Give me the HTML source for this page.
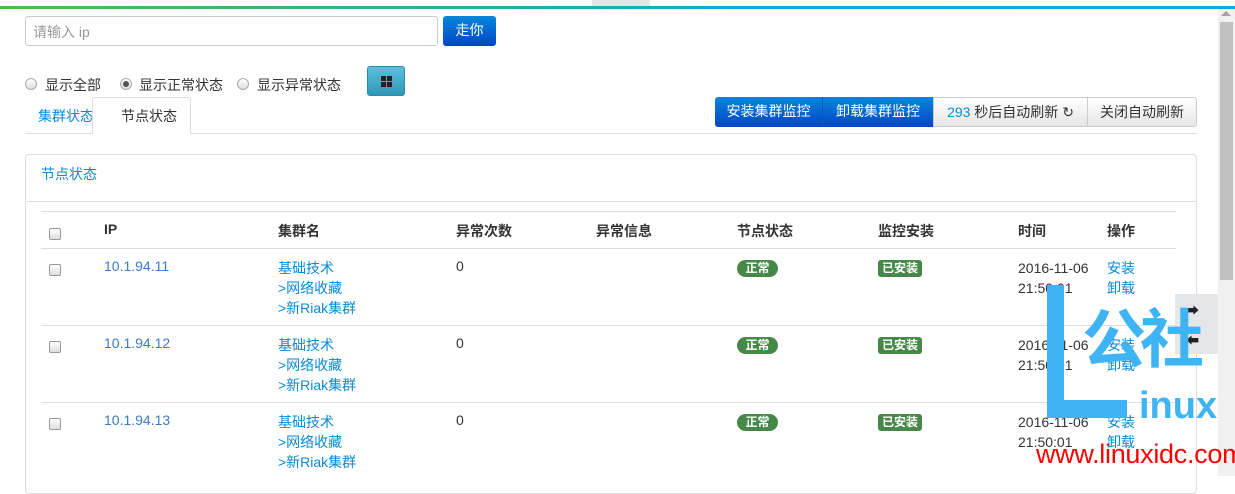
<!DOCTYPE html>
<html><head><meta charset="utf-8"><style>
*{box-sizing:border-box;margin:0;padding:0}
body{width:1235px;height:476px;overflow:hidden;background:#fff;font-family:"Liberation Sans","Noto Sans CJK SC",sans-serif;font-size:14px;color:#333;position:relative}
.a{position:absolute;white-space:nowrap}
.blue{color:#0a8ad2}
.cb{position:absolute;width:12px;height:12px;border:1px solid #999;border-radius:2px;background:linear-gradient(#fff,#ddd)}
.radio{position:absolute;width:12px;height:12px;border:1px solid #aaa;border-radius:50%;background:linear-gradient(#fff,#ddd)}
.btn{position:absolute;height:30px;line-height:28px;text-align:center;font-size:14px}
.th{font-weight:bold;color:#333}
.hl{position:absolute;left:41px;width:1135px;height:1px;background:#ddd}
.b1{position:absolute;background:#468847;color:#fff;font-size:12px;font-weight:bold;height:17px;line-height:17px;text-align:center}
.wm{position:absolute;color:#3fb4f5;font-weight:bold}
</style></head><body>
<div class="a" style="left:592px;top:0;width:58px;height:6px;background:#e6e6e6"></div>
<div class="a" style="left:0;top:6px;width:1235px;height:3px;background:linear-gradient(90deg,#4cc13a,#22b0a0 40%,#10a8e0 60%,#10a8e8)"></div>
<div class="a" style="left:1218px;top:9px;width:17px;height:467px;background:#f0f0f0"></div>
<div class="a" style="left:1220px;top:22px;width:13px;height:258px;background:#c1c1c1"></div>
<div class="a" style="left:1221px;top:11px;width:0;height:0;border-left:5px solid transparent;border-right:5px solid transparent;border-bottom:5px solid #a3a3a3"></div>

<div class="a" style="left:25px;top:16px;width:413px;height:30px;border:1px solid #ccc;border-radius:3px;"></div>
<div class="a" style="left:33px;top:22px;color:#999">请输入 ip</div>
<div class="btn" style="left:443px;top:16px;width:53px;background:linear-gradient(#0a86dc,#0046c6);color:#fff;border-radius:3px">走你</div>

<div class="radio" style="left:25px;top:78px"></div><div class="a" style="left:45px;top:75px">显示全部</div>
<div class="radio" style="left:120px;top:78px"><div style="width:6px;height:6px;border-radius:50%;background:#555;margin:2px"></div></div><div class="a" style="left:139px;top:75px">显示正常状态</div>
<div class="radio" style="left:237px;top:78px"></div><div class="a" style="left:257px;top:75px">显示异常状态</div>
<div class="a" style="left:367px;top:66px;width:38px;height:30px;border-radius:3px;background:linear-gradient(#5bc0de,#2f96b4);border:1px solid #2a8ab0"><div style="position:absolute;left:13px;top:9px;width:5px;height:5px;background:#222;box-shadow:6px 0 #222,0 6px #222,6px 6px #222"></div></div>

<div class="a" style="left:25px;top:133px;width:1172px;height:1px;background:#ddd"></div>
<div class="a blue" style="left:38px;top:106px">集群状态</div>
<div class="a" style="left:92px;top:97px;width:99px;height:37px;border:1px solid #ddd;border-bottom:none;background:#fff;border-radius:3px 3px 0 0"></div>
<div class="a" style="left:121px;top:106px">节点状态</div>

<div class="btn" style="left:715px;top:97px;width:107px;background:linear-gradient(#0a86dc,#0046c6);color:#fff;border-radius:3px 0 0 3px">安装集群监控</div>
<div class="btn" style="left:822px;top:97px;width:111px;background:linear-gradient(#0a86dc,#0046c6);color:#fff;border-left:1px solid #0a5bb0">卸载集群监控</div>
<div class="btn" style="left:933px;top:97px;width:155px;background:linear-gradient(#fff,#e6e6e6);border:1px solid #ccc"><span class="blue">293</span> 秒后自动刷新 ↻</div>
<div class="btn" style="left:1088px;top:97px;width:109px;background:linear-gradient(#fff,#e6e6e6);border:1px solid #ccc;border-left:none;border-radius:0 3px 3px 0">关闭自动刷新</div>

<div class="a" style="left:25px;top:154px;width:1172px;height:340px;border:1px solid #ddd;border-radius:4px"></div>
<div class="a" style="left:26px;top:201px;width:1170px;height:1px;background:#ddd"></div>
<div class="a blue" style="left:41px;top:164px">节点状态</div>

<div class="hl" style="top:211px"></div>
<div class="hl" style="top:248px"></div>
<div class="hl" style="top:325px"></div>
<div class="hl" style="top:402px"></div>
<div class="cb" style="left:49px;top:228px"></div>
<div class="a th" style="left:104px;top:221px">IP</div>
<div class="a th" style="left:278px;top:221px">集群名</div>
<div class="a th" style="left:456px;top:221px">异常次数</div>
<div class="a th" style="left:596px;top:221px">异常信息</div>
<div class="a th" style="left:737px;top:221px">节点状态</div>
<div class="a th" style="left:878px;top:221px">监控安装</div>
<div class="a th" style="left:1018px;top:221px">时间</div>
<div class="a th" style="left:1107px;top:221px">操作</div>

<div class="cb" style="left:49px;top:264px"></div>
<div class="a" style="left:104px;top:258px;color:#3a7bc8">10.1.94.11</div>
<div class="a blue" style="left:278px;top:258px;line-height:20px">基础技术<br>&gt;网络收藏<br>&gt;新Riak集群</div>
<div class="a" style="left:456px;top:258px">0</div>
<div class="b1" style="left:737px;top:260px;width:41px;border-radius:9px">正常</div>
<div class="b1" style="left:878px;top:260px;width:44px;border-radius:3px">已安装</div>
<div class="a" style="left:1018px;top:258px;line-height:20px">2016-11-06<br>21:50:01</div>
<div class="a blue" style="left:1107px;top:258px;line-height:20px">安装<br>卸载</div>

<div class="cb" style="left:49px;top:341px"></div>
<div class="a" style="left:104px;top:335px;color:#3a7bc8">10.1.94.12</div>
<div class="a blue" style="left:278px;top:335px;line-height:20px">基础技术<br>&gt;网络收藏<br>&gt;新Riak集群</div>
<div class="a" style="left:456px;top:335px">0</div>
<div class="b1" style="left:737px;top:337px;width:41px;border-radius:9px">正常</div>
<div class="b1" style="left:878px;top:337px;width:44px;border-radius:3px">已安装</div>
<div class="a" style="left:1018px;top:335px;line-height:20px">2016-11-06<br>21:50:01</div>
<div class="a blue" style="left:1107px;top:335px;line-height:20px">安装<br>卸载</div>

<div class="cb" style="left:49px;top:418px"></div>
<div class="a" style="left:104px;top:412px;color:#3a7bc8">10.1.94.13</div>
<div class="a blue" style="left:278px;top:412px;line-height:20px">基础技术<br>&gt;网络收藏<br>&gt;新Riak集群</div>
<div class="a" style="left:456px;top:412px">0</div>
<div class="b1" style="left:737px;top:414px;width:41px;border-radius:9px">正常</div>
<div class="b1" style="left:878px;top:414px;width:44px;border-radius:3px">已安装</div>
<div class="a" style="left:1018px;top:412px;line-height:20px">2016-11-06<br>21:50:01</div>
<div class="a blue" style="left:1107px;top:412px;line-height:20px">安装<br>卸载</div>

<div class="a" style="left:1175px;top:294px;width:43px;height:60px;background:#e4e6e8"></div>
<div class="a" style="left:1186px;top:300px;font-size:13px;color:#222">➡</div>
<div class="a" style="left:1186px;top:330px;font-size:13px;color:#222">⬅</div>

<div class="a" style="left:1047px;top:285px;width:17px;height:133px;background:#3fb4f5"></div>
<div class="a" style="left:1047px;top:400px;width:80px;height:18px;background:#3fb4f5"></div>
<div class="wm" style="left:1082px;top:298px;font-size:64px;line-height:74px;font-family:'Noto Sans CJK SC',sans-serif;letter-spacing:-6px">公社</div>
<div class="wm" style="left:1139px;top:384px;font-size:38px;line-height:44px">inux</div>
<div class="a" style="left:1036px;top:437px;font-size:27px;color:#f00;line-height:34px;letter-spacing:-0.3px">www.linuxidc.com</div>
</body></html>
